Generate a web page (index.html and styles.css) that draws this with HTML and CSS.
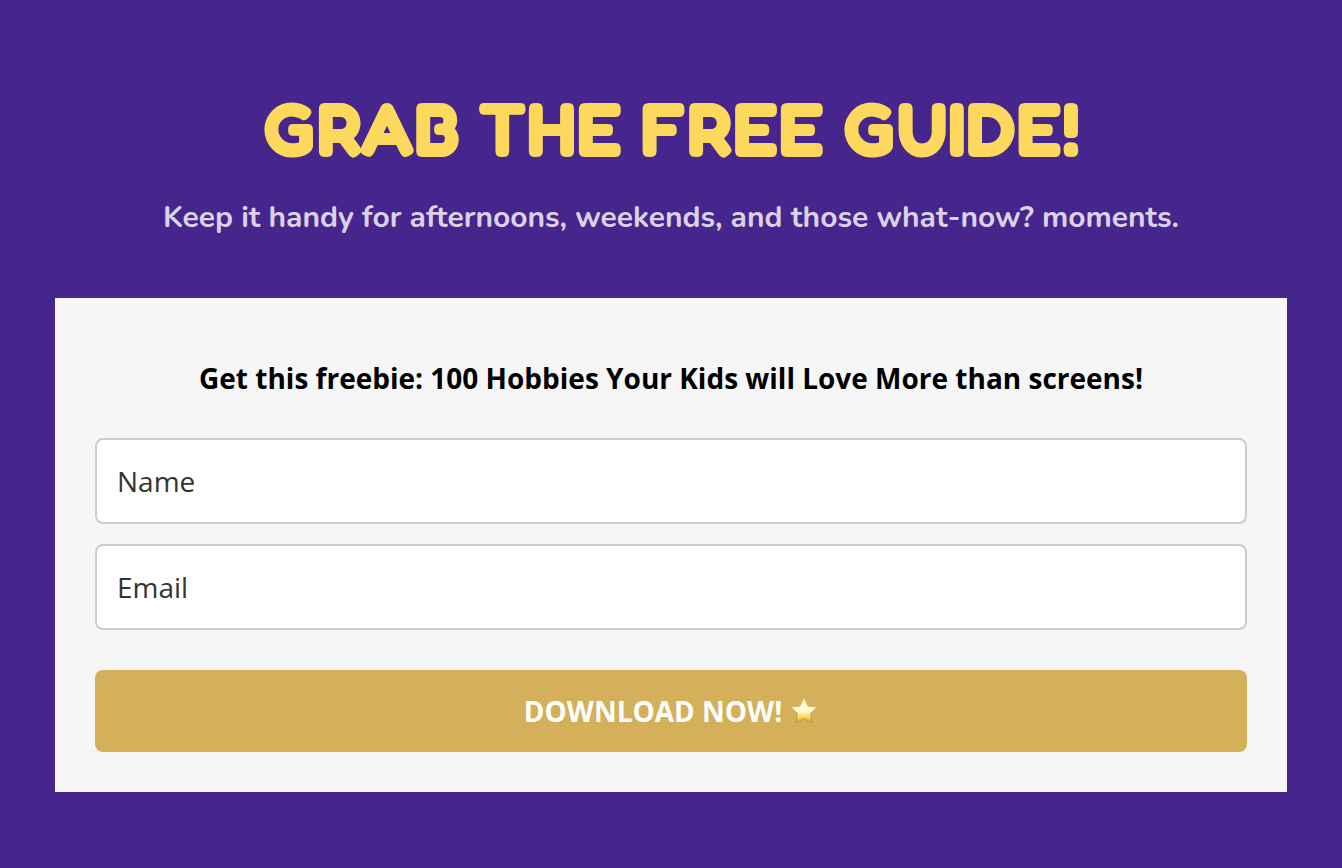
FILE: index.html
```html
<!DOCTYPE html>
<html lang="en">
<head>
  <meta charset="UTF-8">
  <meta name="viewport" content="width=device-width, initial-scale=1.0">
  <title>Grab the Free Guide!</title>
  <link rel="stylesheet" href="styles.css">
</head>
<body>
  <main class="optin">
    <h1 class="optin-title">GRAB THE FREE GUIDE!</h1>
    <p class="optin-subtitle">Keep it handy for afternoons, weekends, and those what-now? moments.</p>

    <form class="optin-form">
      <h2 class="form-heading">Get this freebie: 100 Hobbies Your Kids will Love More than screens!</h2>
      <input class="form-input" type="text" name="name" placeholder="Name" aria-label="Name">
      <input class="form-input" type="email" name="email" placeholder="Email" aria-label="Email">
      <button class="form-button" type="submit">
        <span>DOWNLOAD NOW!</span>
        <svg class="star" viewBox="0 0 28 28" aria-hidden="true">
          <defs>
            <linearGradient id="star-fill" x1="0" y1="0" x2="0" y2="1">
              <stop offset="0" stop-color="#fff0b4"></stop>
              <stop offset="0.25" stop-color="#fffbe6"></stop>
              <stop offset="0.55" stop-color="#fffbd0"></stop>
              <stop offset="0.75" stop-color="#fbdc68"></stop>
              <stop offset="1" stop-color="#dd9320"></stop>
            </linearGradient>
            <linearGradient id="star-edge" x1="0" y1="0" x2="0" y2="1">
              <stop offset="0" stop-color="#eac873"></stop>
              <stop offset="1" stop-color="#d08f2c"></stop>
            </linearGradient>
          </defs>
          <path fill="url(#star-fill)" stroke="url(#star-edge)" stroke-width="1" stroke-linejoin="round" d="M14 .8l4 8.400 9 .9-6.600 6.500 1.900 9.200L14 21.700l-8.300 4.100 1.900-9.200L1 10.100l9-.9z"></path>
        </svg>
      </button>
    </form>
  </main>
</body>
</html>
```

FILE: styles.css
```css
* {
  box-sizing: border-box;
}

body {
  margin: 0;
  min-height: 100vh;
  background-color: #46258c;
  font-family: "Open Sans", sans-serif;
}

.optin {
  padding: 85px 55px 76px;
  text-align: center;
}

.optin-title {
  margin: 0;
  color: #fcd95c;
  font-family: "Fredoka One", Fredoka, Inter, sans-serif;
  font-size: 76px;
  font-weight: 900;
  line-height: 86px;
}

.optin-subtitle {
  margin: 25px 0 58px;
  color: #dad3e8;
  font-family: Nunito, "Open Sans", sans-serif;
  font-size: 30px;
  font-weight: 700;
  line-height: 44px;
}

.optin-form {
  display: flex;
  flex-direction: column;
  padding: 60px 40px 40px;
  background-color: #f6f6f6;
}

.form-heading {
  margin: 0 0 40px;
  color: #000;
  font-size: 28px;
  font-weight: 700;
  line-height: 40px;
}

.form-input {
  width: 100%;
  height: 86px;
  margin-bottom: 20px;
  padding: 0 20px;
  border: 2px solid #ccc;
  border-radius: 8px;
  background-color: #fff;
  color: #333;
  font-family: inherit;
  font-size: 28px;
}

.form-input::placeholder {
  color: #333;
}

.form-button {
  display: flex;
  align-items: center;
  justify-content: center;
  gap: 8px;
  height: 82px;
  margin-top: 20px;
  border: 0;
  border-radius: 8px;
  background-color: #d4b05a;
  color: #fff;
  font-family: inherit;
  font-size: 28px;
  font-weight: 700;
  cursor: pointer;
}

.star {
  width: 28px;
  height: 28px;
}
```
